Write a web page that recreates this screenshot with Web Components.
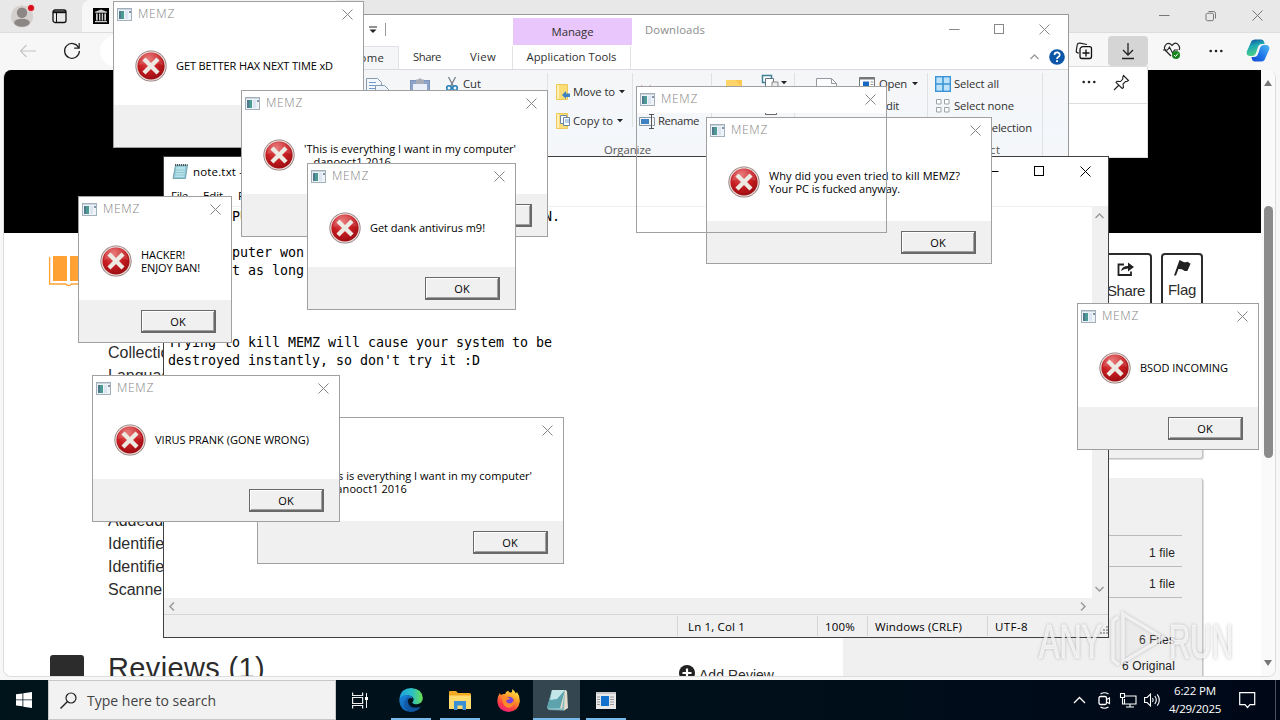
<!DOCTYPE html>
<html lang="en">
<head>
<meta charset="utf-8">
<title>Desktop</title>
<style>
html,body{margin:0;padding:0;overflow:hidden;width:1280px;height:720px;background:#e8e8e8}
</style>
</head>
<body>
<desk-top></desk-top>
<script>
const UI = '"Open Sans","Noto Sans",sans-serif';
const define = (tag, css, html, init) => customElements.define(tag, class extends HTMLElement {
  constructor(){ super(); this.attachShadow({mode:'open'}); }
  connectedCallback(){
    if(this.ready) return; this.ready = true;
    this.shadowRoot.innerHTML = '<style>*{box-sizing:border-box}' + css + '</style>' + (typeof html === 'function' ? html(this) : html);
    if(init) init(this);
  }
});

/* Icons: [width, height, markup] */
const ICONS = {
  app:[15,13,'<rect x=".5" y=".5" width="14" height="12" fill="#eef3f8" stroke="#a3afb9"/><path d="M1 1h13v1H1z" fill="#c9d6e2"/><rect x="2" y="3" width="5" height="8" fill="#4b9b94"/><rect x="2" y="3" width="2" height="8" fill="#50788c"/><path d="M8 3h3v8H8z" fill="#dbe6f2"/><path d="M12 3h2v2h-2z" fill="#8194aa"/>'],
  close:[11,11,'<path d="M.5.5l10 10M10.5.5l-10 10" stroke="currentColor" fill="none"/>'],
  max:[11,11,'<rect x=".5" y=".5" width="9" height="9" stroke="currentColor" fill="none"/>'],
  min:[11,11,'<path d="M0 5.5h10.5" stroke="currentColor"/>'],
  restore:[12,12,'<rect x="1" y="3.2" width="7.5" height="7.5" rx="1.5" stroke="currentColor" fill="none"/><path d="M3.5 1.5h5a2 2 0 0 1 2 2v5" stroke="currentColor" fill="none"/>'],
  error:[32,32,'<defs><radialGradient id="g" cx=".4" cy=".25" r=".8"><stop offset="0" stop-color="#e6696a"/><stop offset=".5" stop-color="#c81e22"/><stop offset="1" stop-color="#970c10"/></radialGradient></defs><circle cx="16" cy="16" r="15.6" fill="#8d7472"/><circle cx="16" cy="16" r="14.8" fill="#e9dcda"/><circle cx="16" cy="16" r="13.6" fill="url(#g)"/><path d="M4 15a12 12 0 0 1 24 0q-12-5-24 0z" fill="#fff" opacity=".13"/><path d="M10.500 10.500l11 11M21.500 10.500l-11 11" stroke="#edeae4" stroke-width="4.300" stroke-linecap="square"/>'],
  avatar:[24,24,'<circle cx="12" cy="12.5" r="11" fill="#d3d0cd"/><circle cx="12" cy="8.7" r="5.2" fill="#8c8784"/><ellipse cx="12" cy="18.7" rx="7.8" ry="4" fill="#8c8784"/><circle cx="21" cy="4" r="3.6" fill="#d90d1c" stroke="#eee" stroke-width=".8"/>'],
  tabs:[15,15,'<rect x="1" y="1" width="13" height="12.5" rx="2" fill="none" stroke="#111" stroke-width="1.3"/><path d="M1 2.2h13v2H1z" fill="#111"/><path d="M4.5 4v9" stroke="#111"/>'],
  archive:[16,16,'<rect width="16" height="16" fill="#000"/><path d="M8 1.4l6 2.4v1H2v-1zM2 13h12v1.3H2zM3 5.6h1.7v6.8H3zM6 5.6h1.4v6.8H6zM8.7 5.6h1.4v6.8H8.7zM11.3 5.6H13v6.8h-1.7z" fill="#ccc"/>'],
  back:[18,14,'<path d="M17 7H1.5M7.5 1L1.5 7l6 6" fill="none" stroke="#c4c4c4" stroke-width="1.1"/>'],
  refresh:[18,18,'<path d="M15.6 5.5A7.4 7.4 0 1 0 16.4 9M16.2 1v5h-5" fill="none" stroke="#222" stroke-width="1.25"/>'],
  collections:[18,18,'<path d="M12 2.5L5 1.2Q2.5 1 2.2 3L1.3 8.5q-.3 2 1.7 2.4L4 11" fill="none" stroke="#222" stroke-width="1.2"/><path d="M5 14.500V8A3 3 0 0 1 8 4.700h6.500a2 2 0 0 1 2 2v7.800a2 2 0 0 1-2 2H7a2 2 0 0 1-2-2z" fill="none" stroke="#111" stroke-width="1.3"/><path d="M11 7.5v7M7.500 11h7" stroke="#111" stroke-width="1.3"/>'],
  download:[14,18,'<path d="M7 1v12M2 8l5 5 5-5M1 16.500h12" fill="none" stroke="#222" stroke-width="1.3"/>'],
  heart:[18,18,'<path d="M8 14L2.500 8.500Q.5 5.500 2.500 3t5-1L9 3.400 10.500 2q3-2 5 1t.5 5" fill="none" stroke="#222" stroke-width="1.2"/><path d="M0 8h4.500l2-3 3 6 2-3H15" fill="none" stroke="#222" stroke-width="1.100"/><circle cx="13" cy="13" r="4" fill="#17831d"/><path d="M11 13l1.500 1.500 2.500-3" stroke="#fff" fill="none"/>'],
  dots:[14,4,'<circle cx="1.700" cy="2" r="1.300" fill="#222"/><circle cx="7" cy="2" r="1.300" fill="#222"/><circle cx="12.300" cy="2" r="1.300" fill="#222"/>'],
  copilot:[24,23,'<defs><linearGradient id="a" x2=".3" y2="1"><stop stop-color="#11449a"/><stop offset=".45" stop-color="#1fa8b4"/><stop offset="1" stop-color="#4cd086"/></linearGradient><linearGradient id="b" x1="1" y1="0" x2="0" y2="1"><stop stop-color="#4eb8f4"/><stop offset=".6" stop-color="#1b6ee6"/><stop offset="1" stop-color="#1549d0"/></linearGradient></defs><path d="M5.500 2Q6.500.5 9 .5h6.500q2 .3 2.500 2l.7 2.500h-2.500Q13 5 12 8l-2 6q-1 3-4 3H3.500Q0 16.500.8 12.500z" fill="url(#a)"/><path d="M18.500 21Q17.500 22.500 15 22.500H8.500q-2-.3-2.500-2L5.500 18H8q3 0 4-3l2-6q1-3 4-3h2.500q3.500.5 2.700 4.500z" fill="url(#b)"/>'],
  pin:[17,17,'<path d="M10.500 1.500l5 5-1.500 1-1.500 0-2.500 2.500.5 3.500-1.300 1L3 8.500l1-1.300 3.500.3L9.800 5V3zM5.500 11.500L1 16" fill="none" stroke="#222" stroke-width="1.100"/>'],
  caret:[8,8,'<path d="M0 1h8" stroke="#222"/><path d="M.5 3.500h7L4 7z" fill="#222"/>'],
  drop:[6,4,'<path d="M0 0h6L3 3.300z" fill="#222"/>'],
  up:[9,6,'<path d="M.5 5l4-4 4 4" stroke="currentColor" stroke-width="1.300" fill="none"/>'],
  down:[9,6,'<path d="M.5 1l4 4 4-4" stroke="currentColor" stroke-width="1.500" fill="none"/>'],
  left:[6,9,'<path d="M5 .5l-4 4 4 4" stroke="currentColor" stroke-width="1.500" fill="none"/>'],
  right:[6,9,'<path d="M1 .5l4 4-4 4" stroke="currentColor" stroke-width="1.500" fill="none"/>'],
  help:[16,16,'<circle cx="8" cy="8" r="7.800" fill="#0e57a8"/><path d="M5.500 6q0-2.600 2.600-2.600T10.700 6q0 1.200-1.400 2T8 10" fill="none" stroke="#fff" stroke-width="1.700"/><path d="M7.100 11.300h1.900v1.800H7.100z" fill="#fff"/>'],
  copydoc:[24,26,'<path d="M.5.5h11l4 4v16H.5z" fill="#f4f8fd" stroke="#8799ad"/><path d="M3 4.500h7M3 7.500h10M3 10.500h10M3 13.500h10" stroke="#6d99cf"/><path d="M9.500 7.500h9l4 4v14h-13z" fill="#eef4fb" stroke="#8799ad"/><path d="M12 12.500h8M12 15.500h8" stroke="#6d99cf"/>'],
  paste:[20,26,'<rect x=".5" y="2.500" width="19" height="23" fill="#8da3c9" stroke="#8094b8"/><rect x="3" y="6" width="14" height="18" fill="#e9f0fa"/><path d="M6 1.500h2L10 0l2 1.500h2V6H6z" fill="#a9adb8"/>'],
  cut:[12,16,'<path d="M2.500 1l5 9.500M9.500 1l-5 9.500" stroke="#77808a" stroke-width="1.300"/><circle cx="3" cy="12" r="2.300" fill="none" stroke="#2580b8" stroke-width="1.600"/><circle cx="9" cy="12" r="2.300" fill="none" stroke="#2580b8" stroke-width="1.600"/>'],
  moveto:[15,16,'<path d="M.5.5h11v15H.5z" fill="#fbdd78" stroke="#ecc85c"/><path d="M2 1v14" stroke="#fff0b8" stroke-width="2"/><path d="M6 11l4-4v2.500h4V13h-4v2z" fill="#3d83c4"/>'],
  copyto:[15,16,'<path d="M.5.5h11v15H.5z" fill="#fbdd78" stroke="#ecc85c"/><path d="M2 1v14" stroke="#fff0b8" stroke-width="2"/><path d="M4.500 2.500h6v8h-6z" fill="#fff" stroke="#6b87a6"/><path d="M7.500 4.500h6v8h-6z" fill="#fff" stroke="#6b87a6"/><path d="M9 7h4M9 9h4" stroke="#68a0d8"/>'],
  delx:[14,14,'<path d="M2 1l10 12M12 1L2 13" stroke="#b24646" stroke-width="2"/>'],
  rename:[17,15,'<path d="M12 3.500H.5v8H12M13.500 3.500h2v8h-2" fill="none" stroke="#8799a8"/><rect x="2" y="5" width="8" height="5" fill="#3d83c4"/><path d="M10 .5h5M10 14.500h5M12.500.5v14" stroke="#555"/>'],
  newfold:[16,20,'<path d="M0 0h16v20H0z" fill="#ffd56a"/><path d="M0 0h9l7 7V0z" fill="#f3bd3d" opacity=".5"/>'],
  newitem:[18,16,'<path d="M.5 1.500h9v7h-9z" fill="#fff" stroke="#3e8195" stroke-width="1.500"/><path d="M3.500 4.500h8v8h-8z" fill="#fff" stroke="#5d7485"/><path d="M10 8h6v7h-6z" fill="#eee" stroke="#888"/>'],
  easy:[12,14,'<path d="M.5 1.500h11v12H.5z" fill="#fff" stroke="#666"/>'],
  props:[21,28,'<path d="M.5.5h15l5 5v22H.5z" fill="#fcfdff" stroke="#93999f"/><path d="M15.500.5v5h5" fill="none" stroke="#93999f"/>'],
  open:[16,14,'<path d="M.5.500h15v13H.5z" fill="#fff" stroke="#777"/><path d="M.5 1.500h15" stroke="#777" stroke-width="2"/><rect x="4" y="4.500" width="6" height="7" fill="#1769c2"/><path d="M11.500 5h3M11.500 7.500h3" stroke="#999"/>'],
  selall:[16,16,'<rect x=".7" y=".7" width="14.600" height="14.600" fill="#bfe2fb" stroke="#3a94d6" stroke-width="1.400"/><path d="M8 0v16M0 8h16" stroke="#3a94d6" stroke-width="1.600"/>'],
  selnone:[14,14,'<path d="M.5.500h4.500v4.500H.5zM8.500.500H13v4.500H8.500zM.5 8.500h4.500V13H.5zM8.500 8.500H13V13H8.500z" fill="#fff" stroke="#9da3a8"/>'],
  note:[16,17,'<path d="M3.500 2h12l-2 13.500H1z" fill="#8ac6d3" stroke="#6a99a6" stroke-width=".8"/><path d="M4.500 4h9l-1.500 10H3z" fill="#b9e3ea"/><path d="M3 2h12.500" stroke="#555" stroke-width="2" stroke-dasharray="1 1"/><path d="M4 7h9M3.500 9.500h9M3 12h9" stroke="#82bcc9" stroke-width=".7"/>'],
  grip:[9,9,'<path d="M7 1h2M4 4h2M7 4h2M1 7h2M4 7h2M7 7h2" stroke="#aaa" stroke-width="2"/>'],
  book:[40,31,'<path d="M4 0h13q1 0 1 1v24H4zM21 0h14v25H21z" fill="#ffa133"/><path d="M.6 1v27h16q3 3 6 0h16V1" fill="none" stroke="#ffa133" stroke-width="1.300"/>'],
  share:[18,14,'<path d="M7 2.500H1.500V13H14V9.500" fill="none" stroke="#222" stroke-width="1.800"/><path d="M4 9q1-5 7-5V.500L17 5l-6 4.500V6.500Q7 6.500 4 9z" fill="#222"/>'],
  flag:[17,16,'<path d="M5.500 0l4 2q3 .5 4-.3l3 2-3 7q-2 1-4-.5T4.500 9L2 15.500H0z" fill="#222"/>'],
  plus:[16,16,'<circle cx="8" cy="8" r="8" fill="#222"/><path d="M8 3.500v9M3.500 8h9" stroke="#fff" stroke-width="2.200"/>'],
  win:[16,16,'<path d="M0 2.300l6.500-.9v6H0zM7.300 1.300L16 0v7.400H7.300zM0 8.300h6.500v6L0 13.400zM7.300 8.300H16V16l-8.700-1.300z" fill="#fff"/>'],
  search:[17,17,'<circle cx="11" cy="6" r="5" fill="none" stroke="#222" stroke-width="1.200"/><path d="M7.500 9.500L.5 16.500" stroke="#222" stroke-width="1.400"/>'],
  taskview:[17,17,'<path d="M.6.500v3h10v-3M.6 16.500v-3h10v3M.6 5.500h10v6H.6z" fill="none" stroke="#eee" stroke-width="1.200"/><path d="M14.500 1v15" stroke="#eee"/><rect x="13" y="5" width="3" height="3" fill="#fff"/>'],
  edge:[24,24,'<defs><linearGradient id="e" x1="0" x2="1"><stop stop-color="#1fa2e0"/><stop offset=".55" stop-color="#2cc0c4"/><stop offset="1" stop-color="#6be04f"/></linearGradient><linearGradient id="f" x2=".6" y2="1"><stop stop-color="#1a86dc"/><stop offset="1" stop-color="#0d5aa8"/></linearGradient></defs><path d="M.3 11Q1.500.3 12.300.1 23 .8 23.800 10q.1 5.500-6 6.300-4-.1-4.500-1.800 2.500-3 .3-5.500Q7.500 4.500.3 11z" fill="url(#e)"/><path d="M.2 12.500Q1 7.300 7 6.900q6 .3 7 3.600Q8.500 8.800 8.600 14q1.300 6.500 7.600 6.300 3-.2 5.500-1.700Q18.500 24 11.800 24 1 23.500.2 12.500z" fill="url(#f)"/><path d="M5 17q-.5-7 5.500-8.500Q8 12 10 16t11 3q-2 4-8 4.800Q6.500 23 5 17z" fill="#114f96" opacity=".55"/>'],
  folder:[22,19,'<path d="M0 1Q0 0 1 0h6l2 2h11.500Q22 2 22 3.500V18H0z" fill="#f1ab23"/><path d="M0 4.500h22V18H0z" fill="#ffdb6e"/><path d="M5 10h12v9h-3.500v-4.500h-5V19H5z" fill="#3b8fd4"/>'],
  firefox:[23,23,'<defs><linearGradient id="h" x1=".8" y1="0" x2=".3" y2="1"><stop stop-color="#fff04a"/><stop offset=".4" stop-color="#ff9a26"/><stop offset=".75" stop-color="#ff3e45"/><stop offset="1" stop-color="#e9207c"/></linearGradient></defs><path d="M2.800 4q.3 1.500 1.300 2Q6 4.500 8 5q1-3 3.500-3.500-.5 1.500 1.500 2 3 .5 2-3.500 3 1.500 3.800 4.500l1.200-1.500Q23 7 22.800 12.500 21.500 22.500 11.500 23 1 22 .3 12.500.300 7.500 2.800 4z" fill="url(#h)"/><circle cx="12" cy="12.500" r="4.800" fill="#7a42dc"/><path d="M5 8q3-1 6 .5l2 .5q-1 2-3.500 2-1 3 3 3.500 3-.2 4-3 1.500 5-3 7-8 1.500-8.500-10.500z" fill="#ff8a2a"/>'],
  notetask:[24,22,'<path d="M7 1h14l-1.500 20L2 19z" fill="#93cbd3"/><path d="M7 1h13l-3 18L2 19z" fill="#5da3ad"/><path d="M7 1h13l-8 9-7 1z" fill="#c3e6e9"/><path d="M20 1l2 1 1 17-4 2.500-4-2z" fill="#e4ddcb"/><path d="M20 1l-3 18.500L2 19l2 2 15 .5z" fill="#86b9c0"/>'],
  apptask:[20,17,'<path d="M0 0h20v17H0z" fill="#e8e8e8"/><path d="M0 0h20v2H0z" fill="#c7c7c7"/><rect x="5" y="4" width="8" height="10" fill="#1271cf"/><path d="M1 5h3M1 7.500h3M1 10h3M1 12.500h3M14 5h4M14 7.500h4M14 10h4M14 12.500h4" stroke="#999"/>'],
  chevup:[13,8,'<path d="M1 7l5.500-5.500L12 7" fill="none" stroke="#fff" stroke-width="1.300"/>'],
  meet:[13,17,'<rect x="1" y="4.500" width="7.500" height="8" rx="1.500" fill="none" stroke="#fff" stroke-width="1.300"/><path d="M8.500 7.500L11.500 6v5.500l-3-1.500M2.500 2q4-2.500 8 0M2.500 15q4 2.500 8 0" fill="none" stroke="#fff" stroke-width="1.100"/>'],
  net:[17,15,'<path d="M4.500 3H16v8H4.500V6M10 11v3M6 14h8M.5.500h4v4h-4zM2.500 4.500V11H5" fill="none" stroke="#fff" stroke-width="1.100"/>'],
  sound:[17,14,'<path d="M.6 4.500h2.500L6.500 1v12L3.100 9.500H.6z" fill="none" stroke="#fff" stroke-width="1.100"/><path d="M8.500 5q1.500 2 0 4M10.800 3q3 4 0 8M13.200 1.300q4.300 5.700 0 11.400" fill="none" stroke="#fff" stroke-width="1.100"/>'],
  notif:[17,17,'<path d="M.7.700h15v12H11L8.500 15.500 6 12.700H.7z" fill="none" stroke="#fff" stroke-width="1.200"/>'],
};
define('ui-icon', ':host{display:inline-block;flex:none;line-height:0;font-size:0}svg{display:block;overflow:visible}',
  el => { const [w,h,m] = ICONS[el.getAttribute('name')]; return `<svg width="${w}" height="${h}" viewBox="0 0 ${w} ${h}">${m}</svg>`; });

/* One line of text tracked to a given advance width */
define('fit-text', ':host{display:block;flex:none;white-space:pre;line-height:16px}span{display:inline-block}', '<span><slot></slot></span>', el => {
  const w = +el.getAttribute('w'); if(!w) return;
  const s = el.shadowRoot.querySelector('span'), n = el.textContent.length;
  s.style.letterSpacing = ((w - s.getBoundingClientRect().width) / n).toFixed(3) + 'px';
});

define('message-dialog', `
:host{position:absolute;height:147px;border:1px solid #a0a0a0;background:#fff;font:11px ${UI};color:#000;display:flex;flex-direction:column;box-sizing:border-box}
:host([ghost]){background:none}
header{height:26px;flex:none;display:flex;align-items:center;padding:0 10px 2px 3px;background:#fff;color:#858585;font-size:12px;gap:6px}
header fit-text{font-weight:300}
header .x{margin-left:auto}
.body{height:75px;flex:none;display:flex;align-items:center;gap:9px;padding-left:21px;margin-bottom:2px}
.foot{flex:1;background:#f0f0f0;display:flex;justify-content:flex-end;padding:10px 15px 0 0}
button{all:unset;box-sizing:border-box;width:75px;height:23px;border:solid #696969;border-width:1px 2px 2px 1px;outline:0;text-align:center;font:11px/19px ${UI};box-shadow:inset 1px 1px #fff,inset -1px -1px #a0a0a0;background:#f0f0f0}
`, el => `<header><ui-icon name="app"></ui-icon><fit-text w="37">MEMZ</fit-text><ui-icon class="x" name="close"></ui-icon></header>
${el.hasAttribute('ghost') ? '' : '<div class="body"><ui-icon name="error"></ui-icon><div class="msg"><slot></slot></div></div><div class="foot"><button>OK</button></div>'}`);

define('edge-browser', `
:host{position:absolute;left:0;top:0;width:1280px;height:680px;background:#f7f7f8;font-family:"Liberation Sans",sans-serif;color:#2c2c2c;display:flex;flex-direction:column;overflow:hidden}
.tabs{height:32px;flex:none;background:#e8e8e8;display:flex;align-items:center}
.tab{width:260px;height:32px;background:#f7f7f8;margin-left:15px;padding:8px 11px;border-radius:8px 8px 0 0}
.win{margin-left:auto;display:flex;gap:35px;color:#777;padding-right:17px}
.bar{height:38px;flex:none;display:flex;align-items:center;border-top:1px solid #ddd;padding-bottom:2px}
.url{background:#fff;width:940px;height:32px;border-radius:16px;margin-left:19px;flex:none}
.tools{margin-left:auto;display:flex;align-items:center;padding-right:10px}
.dl{width:40px;height:30px;border-radius:4px;background:#d5d5d5;display:grid;place-items:center;margin:0 15px}
.view{margin:0 4px 0 3px;width:1273px;height:607px;border:1px solid #ddd;border-top:0;border-radius:8px;overflow:hidden;display:flex;background:#fff;flex:none}
.page{width:1257px;height:607px;overflow:hidden;flex:none}
.hero{height:163px;background:#000}
.cols{display:flex;height:443px}
.left{width:839px;height:443px;display:flex;flex-direction:column;flex:none}
.top{display:flex;height:414px;flex:none}
.top>ui-icon{margin:23px 0 0 45px;width:59px}
.meta{padding-top:109px;font-size:16px}
.meta fit-text{line-height:22.9px}
.rev{display:flex;height:30px;overflow:hidden}
.sq{width:34px;height:30px;background:#2c2c2c;border-radius:3px;margin:8px 24px 0 46px;flex:none}
.rev h2{margin:3px 0 0;font-size:29px;font-weight:400;width:571px;flex:none}
.rev h2 fit-text{line-height:36px}
.add{display:flex;gap:4px;font-size:14px;padding-top:18px;flex:none}
.add fit-text{line-height:20px}
.right{width:361px}
.btns{display:flex;justify-content:flex-end;gap:9px;height:92px;padding:20px 1px 0 0}
.b{border:2px solid #2c2c2c;border-radius:4px;width:42px;height:60px;display:flex;flex-direction:column;align-items:center;padding-top:6px;font-size:15px;gap:6px}
.b.s{width:52px;padding-top:7px}
.b.s{gap:7px}.b:not(.s){padding-top:5px}
.card{background:#f0f0f0;border:solid #c4c4c4;border-width:0 1px 1px 0;border-radius:3px;font-size:12px;color:#222;box-shadow:1px 1px #ddd}
.c1{height:134px;width:360px;margin-bottom:19px}
.c2{height:220px;width:360px;padding:57px 20px 0 20px}
.row{height:31px;border-top:1px solid #bbb;display:flex;justify-content:flex-end;padding:9px 7px 0}
.sb{flex:1;background:#fafafa;display:flex;flex-direction:column;align-items:center;padding:10px 0 0}
.thumb{width:9px;height:252px;border-radius:5px;background:#8b8b8b;margin:120px 0 202px}
.arr{width:0;border:4.500px solid transparent;border-bottom:6px solid #777;border-top:0}
.arr.d{border:4.500px solid transparent;border-top:6px solid #777;border-bottom:0}
`, `
<div class="tabs"><ui-icon name="avatar" style="margin-left:10px"></ui-icon><ui-icon name="tabs" style="margin-left:18px"></ui-icon><div class="tab"><ui-icon name="archive"></ui-icon></div>
<div class="win"><ui-icon name="min"></ui-icon><ui-icon name="restore"></ui-icon><ui-icon name="close"></ui-icon></div></div>
<div class="bar"><ui-icon name="back" style="margin-left:19px"></ui-icon><ui-icon name="refresh" style="margin-left:26px"></ui-icon><div class="url"></div>
<div class="tools"><ui-icon name="collections"></ui-icon><div class="dl"><ui-icon name="download"></ui-icon></div><ui-icon name="heart"></ui-icon><ui-icon name="dots" style="margin:0 23px 0 28px"></ui-icon><ui-icon name="copilot"></ui-icon></div></div>
<div class="view"><div class="page"><div class="hero"></div>
<div class="cols"><div class="left"><div class="top"><ui-icon name="book"></ui-icon><div class="meta"><fit-text>Collection</fit-text><fit-text>Language</fit-text><fit-text style="margin-top:122px">Addeddate</fit-text><fit-text>Identifier</fit-text><fit-text>Identifier-ark</fit-text><fit-text>Scanner</fit-text></div></div>
<div class="rev"><div class="sq"></div><h2><fit-text w="157">Reviews (1)</fit-text></h2><div class="add"><ui-icon name="plus"></ui-icon><fit-text w="75">Add Review</fit-text></div></div></div>
<div class="right"><div class="btns"><div class="b s"><ui-icon name="share"></ui-icon><fit-text w="38">Share</fit-text></div><div class="b"><ui-icon name="flag"></ui-icon><fit-text w="28">Flag</fit-text></div></div>
<div class="card c1"></div><div class="card c2"><div class="row"><fit-text w="26">1 file</fit-text></div><div class="row"><fit-text w="26">1 file</fit-text></div><div class="row" style="height:56px;padding-top:34px"><fit-text w="36">6 Files</fit-text></div><div class="row" style="border:0;padding-top:5px"><fit-text w="53">6 Original</fit-text></div></div></div></div></div>
<div class="sb"><i class="arr"></i><i class="thumb"></i><i class="arr d"></i></div></div>`);

define('download-flyout', `:host{position:absolute;left:900px;top:66px;width:248px;height:92px;background:#fff;border:1px solid #ddd;box-sizing:border-box}
.h{display:flex;justify-content:flex-end;align-items:center;gap:17px;height:37px;padding:0 17px 6px 0;border-bottom:1px solid #ddd}`,
  `<div class="h"><ui-icon name="dots"></ui-icon><ui-icon name="pin"></ui-icon></div>`);

define('file-explorer', `
:host{position:absolute;left:323px;top:14px;width:746px;height:160px;border:1px solid #999;background:#fff;box-sizing:border-box;font:11.300px ${UI};color:#303030;display:flex;flex-direction:column;overflow:hidden}
.title{height:31px;flex:none;display:flex;align-items:center;padding-bottom:2px}
.sep{width:1px;height:13px;background:#999;margin:0 127px 0 8px}
.manage{width:119px;height:27px;background:#e9c6fb;margin:3px 13px 0 0;padding-top:6px;display:flex;justify-content:center;align-self:flex-start}
.win{margin-left:auto;display:flex;gap:34px;padding-right:18px;color:#888}
.tabs{height:23px;flex:none;display:flex;align-items:center;padding-bottom:1px}
.home{width:75px;height:24px;background:#f5f6f7;border:solid #dfe3e8;border-width:1px 1px 0;text-align:right;padding:3px 14px 0 0;display:flex;justify-content:flex-end;margin-bottom:-1px}
.at{width:119px;height:23px;border:solid #e3e3e3;border-width:0 1px;margin:0 auto 0 16px;display:flex;justify-content:center;align-items:center}
.rib{flex:1;background:linear-gradient(#f5f6f7,#f4f7fb 60%,#f5f6f7);border-top:1px solid #d9dbde;display:flex;padding-top:3px}
.g{height:87px;border-right:1px solid #dfe1e3;display:flex;flex:none;position:relative;flex-direction:column}
.r{display:flex;align-items:center;gap:4px;height:22px}
.cols{display:flex;height:69px;flex:none}
.lab{display:flex;justify-content:center;color:#555;height:16px}
`, `
<div class="title"><ui-icon name="caret" style="margin-left:45px"></ui-icon><div class="sep"></div><div class="manage"><fit-text w="42">Manage</fit-text></div><fit-text w="60" style="color:#8c8c8c">Downloads</fit-text>
<div class="win"><ui-icon name="min"></ui-icon><ui-icon name="max"></ui-icon><ui-icon name="close"></ui-icon></div></div>
<div class="tabs"><div class="home"><fit-text w="33">Home</fit-text></div><fit-text w="28" style="margin-left:14px">Share</fit-text><fit-text w="26" style="margin-left:29px">View</fit-text><div class="at"><fit-text w="90">Application Tools</fit-text></div><ui-icon name="up" style="color:#999"></ui-icon><ui-icon name="help" style="margin:0 3px 0 10px"></ui-icon></div>
<div class="rib">
<div class="g" style="width:224px"><div class="cols"><ui-icon name="copydoc" style="margin:5px 0 0 42px"></ui-icon><ui-icon name="paste" style="margin:5px 0 0 20px"></ui-icon><div class="r" style="margin-left:12px"><ui-icon name="cut" style="margin-left:4px"></ui-icon><fit-text w="18" style="margin-left:1px">Cut</fit-text></div></div></div>
<div class="g" style="width:164px"><div class="cols"><div style="width:85px;border-right:1px solid #dfe1e3;padding:8px 0 0 8px;height:54px"><div class="r"><ui-icon name="moveto"></ui-icon><fit-text w="42" style="margin-left:-2px">Move to</fit-text><ui-icon name="drop"></ui-icon></div><div class="r" style="margin-top:7px"><ui-icon name="copyto"></ui-icon><fit-text w="40" style="margin-left:-2px">Copy to</fit-text><ui-icon name="drop"></ui-icon></div></div>
<div style="padding:8px 0 0 6px"><div class="r"><ui-icon name="delx"></ui-icon></div><div class="r" style="margin-top:7px;gap:2px"><ui-icon name="rename"></ui-icon><fit-text w="41">Rename</fit-text></div></div></div><div class="lab" style="padding-right:4px"><fit-text w="47">Organize</fit-text></div></div>
<div class="g" style="width:83px"><div class="cols"><div style="padding:7px 0 0 13px;width:50px"><ui-icon name="newfold" style="margin-left:1px"></ui-icon><fit-text w="24" style="margin:12px 0 0 0">New</fit-text></div><div><ui-icon name="newitem" style="margin-top:1px"></ui-icon><ui-icon name="easy" style="display:block;margin:8px 0 0 3px"></ui-icon></div><ui-icon name="drop" style="margin:8px 0 0 1px"></ui-icon></div></div>
<div class="g" style="width:133px"><div class="cols"><div style="padding:5px 0 0 6px;width:58px"><ui-icon name="props" style="margin-left:15px"></ui-icon><fit-text w="53" style="margin-top:6px">Properties</fit-text></div><div><div class="r"><ui-icon name="open" style="margin-left:6px"></ui-icon><fit-text w="28">Open</fit-text><ui-icon name="drop" style="margin-left:1px"></ui-icon></div><div class="r"><ui-icon name="easy" style="margin:0 2px 0 9px"></ui-icon><fit-text w="19">Edit</fit-text></div></div></div></div>
<div class="g" style="width:115px;padding-left:7px"><div class="cols" style="flex-direction:column"><div class="r" style="gap:3px"><ui-icon name="selall"></ui-icon><fit-text w="45">Select all</fit-text></div><div class="r" style="gap:3px"><ui-icon name="selnone" style="margin:0 1px"></ui-icon><fit-text w="60">Select none</fit-text></div><div class="r" style="gap:3px"><ui-icon name="selnone" style="margin:0 1px"></ui-icon><fit-text w="78">Invert selection</fit-text></div></div><div class="lab" style="padding-right:10px"><fit-text w="34">Select</fit-text></div></div>
</div>`);

define('note-pad', `
:host{position:absolute;left:163px;top:156px;width:946px;height:482px;border:1px solid #404040;background:#fff;box-sizing:border-box;font:11.500px ${UI};color:#000;display:flex;flex-direction:column}
.t{height:29px;flex:none;display:flex;align-items:center;padding:0 17px 0 8px;gap:5px}
.win{margin-left:auto;display:flex;gap:35px}
.m{height:21px;flex:none;display:flex;gap:15px;padding:2px 0 0 7px;border-bottom:1px solid #f0f0f0}
.mid{flex:1;display:flex}
pre{margin:0;flex:1;padding:1px 0 0 4px;font:13.330px/18px "DejaVu Sans Mono",monospace;font-kerning:none;letter-spacing:-.026px}
.vs{width:16px;background:#f0f0f0;color:#999;display:flex;flex-direction:column;justify-content:space-between;align-items:center;padding:6px 1px 6px 0}
.hs{height:16px;flex:none;background:#f0f0f0;color:#999;display:flex;justify-content:space-between;align-items:center;padding:0 22px 0 5px}
.st{height:23px;flex:none;background:#f0f0f0;border-top:1px solid #d5d5d5;display:flex;justify-content:flex-end}
.st div{border-left:1px solid #d5d5d5;padding:3px 0 0 9px;height:20px;margin-top:1px}
`, `
<div class="t"><ui-icon name="note"></ui-icon><fit-text w="101">note.txt - Notepad</fit-text><div class="win"><ui-icon name="min"></ui-icon><ui-icon name="max"></ui-icon><ui-icon name="close"></ui-icon></div></div>
<div class="m"><fit-text w="17">File</fit-text><fit-text w="20">Edit</fit-text><fit-text w="38">Format</fit-text><fit-text w="26">View</fit-text></div>
<div class="mid"><pre>YOUR COMPUTER HAS BEEN FUCKED BY THE MEMZ TROJAN.

Your computer won't boot up again,
so use it as long as you can!



Trying to kill MEMZ will cause your system to be
destroyed instantly, so don't try it :D</pre><div class="vs"><ui-icon name="up"></ui-icon><ui-icon name="down"></ui-icon></div></div>
<div class="hs"><ui-icon name="left"></ui-icon><ui-icon name="right"></ui-icon></div>
<div class="st"><div style="width:140px"><fit-text w="57" style="margin-left:1px">Ln 1, Col 1</fit-text></div><div style="width:50px;padding-left:7px"><fit-text w="30">100%</fit-text></div><div style="width:120px;padding-left:7px"><fit-text w="87">Windows (CRLF)</fit-text></div><div style="width:121px;padding-left:7px;display:flex;justify-content:space-between"><fit-text w="33">UTF-8</fit-text><ui-icon name="grip" style="margin-top:7px"></ui-icon></div></div>`);

define('task-bar', `
:host{position:absolute;left:0;top:680px;width:1280px;height:40px;background:linear-gradient(90deg,#00141c,#000f1a 60%,#000818);display:flex;box-sizing:border-box;font:11.500px ${UI};color:#fff}
.s{width:48px;display:grid;place-items:center}
.q{width:288px;background:#f2f2f2;border:1px solid #c8c8c8;display:flex;align-items:center;padding-left:11px;gap:10px;color:#444;font-size:14px}
.i{width:40px;display:grid;place-items:center;margin-right:9px}
.on{box-shadow:inset 0 -2px #76b9ed}
.act{width:47px;background:#34464f;margin:0 6px 0 -4px}
.tray{margin-left:auto;display:flex;align-items:center}
.clk{width:54px;display:flex;flex-direction:column;align-items:center;margin-left:8px}
.clk fit-text{line-height:18px}
.end{width:1px;height:40px;background:#465561;margin:0 4px 0 19px}
`, `
<div class="s"><ui-icon name="win"></ui-icon></div>
<div class="q"><ui-icon name="search"></ui-icon><fit-text w="129" style="line-height:18px;padding-top:2px">Type here to search</fit-text></div>
<div class="i" style="width:48px;margin-right:7px"><ui-icon name="taskview"></ui-icon></div>
<div class="i on"><ui-icon name="edge"></ui-icon></div><div class="i on"><ui-icon name="folder"></ui-icon></div><div class="i" style="margin-left:-1px"><ui-icon name="firefox"></ui-icon></div><div class="i on act"><ui-icon name="notetask"></ui-icon></div><div class="i on"><ui-icon name="apptask"></ui-icon></div>
<div class="tray"><ui-icon name="chevup"></ui-icon><ui-icon name="meet" style="margin-left:12px"></ui-icon><ui-icon name="net" style="margin-left:9px"></ui-icon><ui-icon name="sound" style="margin-left:7px"></ui-icon><div class="clk" style="margin-left:7px"><fit-text w="42">6:22 PM</fit-text><fit-text w="52">4/29/2025</fit-text></div><ui-icon name="notif" style="margin-left:17px"></ui-icon><div class="end"></div></div>`);

define('water-mark', `:host{position:absolute;left:1036px;top:606px;width:200px;height:66px}svg{display:block;filter:drop-shadow(0 0 1.500px rgba(90,90,90,.5))}text{font:48px "Liberation Sans",sans-serif}`,
  `<svg width="200" height="66" viewBox="0 0 200 66" fill="#fff" fill-opacity=".72"><g stroke="#fff" stroke-opacity=".6"><text x="3" y="52" textLength="63" lengthAdjust="spacingAndGlyphs">ANY</text><text x="133" y="52" textLength="64" lengthAdjust="spacingAndGlyphs">RUN</text></g>
<path d="M87 8l40 24-40 24zM82 11l-5 4v39l6 5" fill="#fff" fill-opacity=".1" stroke="#fff" stroke-width="3.500" stroke-opacity=".72"/></svg>`);

define('desk-top', ':host{display:block;position:relative;width:1280px;height:720px;overflow:hidden}', `
<edge-browser></edge-browser>
<download-flyout></download-flyout>
<file-explorer></file-explorer>
<note-pad></note-pad>
<message-dialog style="left:113px;top:1px;width:251px"><fit-text w="157">GET BETTER HAX NEXT TIME xD</fit-text></message-dialog>
<message-dialog style="left:241px;top:90px;width:307px"><fit-text w="212" style="line-height:13px">'This is everything I want in my computer'</fit-text><fit-text w="87" style="line-height:13px"> - danooct1 2016</fit-text></message-dialog>
<message-dialog style="left:307px;top:163px;width:209px"><fit-text w="115">Get dank antivirus m9!</fit-text></message-dialog>
<message-dialog style="left:78px;top:196px;width:154px"><fit-text w="44" style="line-height:13px">HACKER!</fit-text><fit-text w="59" style="line-height:13px">ENJOY BAN!</fit-text></message-dialog>
<message-dialog style="left:257px;top:417px;width:307px"><fit-text w="212" style="line-height:13px">'This is everything I want in my computer'</fit-text><fit-text w="87" style="line-height:13px"> - danooct1 2016</fit-text></message-dialog>
<message-dialog style="left:92px;top:375px;width:248px"><fit-text w="154">VIRUS PRANK (GONE WRONG)</fit-text></message-dialog>
<message-dialog style="left:706px;top:117px;width:286px"><fit-text w="191" style="line-height:13px">Why did you even tried to kill MEMZ?</fit-text><fit-text w="131" style="line-height:13px">Your PC is fucked anyway.</fit-text></message-dialog>
<message-dialog ghost style="left:636px;top:86px;width:251px"></message-dialog>
<message-dialog style="left:1077px;top:303px;width:182px"><fit-text w="88">BSOD INCOMING</fit-text></message-dialog>
<water-mark></water-mark>
<task-bar></task-bar>`);
</script>
</body>
</html>
